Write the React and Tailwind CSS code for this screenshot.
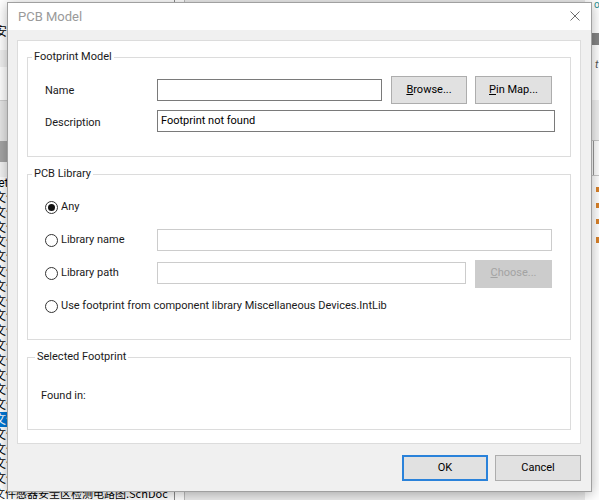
import React from 'react';

const fileRows = Array.from({ length: 20 }, (_, i) => i);

function Background() {
  return (
    <div className="flex h-full">
      {/* project tree on the left, mostly hidden behind the dialog */}
      <div className="flex w-[175px] shrink-0 flex-col overflow-hidden border-r border-[#8c8c8c] bg-white text-[12px] text-black font-['Noto_Sans_CJK_SC',sans-serif]">
        <div className="h-[23px] shrink-0" />
        <div className="-ml-[5px] h-[16px] shrink-0 leading-[16px] whitespace-nowrap">安</div>
        <div className="h-[11px] shrink-0" />
        <div className="h-[17px] shrink-0 bg-[#f0f0f0]" />
        <div className="h-[33px] shrink-0" />
        <div className="h-[41px] shrink-0 border-t border-[#cfcfcf] bg-[#e6e6e6]" />
        <div className="h-[21px] shrink-0 bg-[#a5a5a5]" />
        <div className="h-[15px] shrink-0 bg-[#f3f3f3]" />
        <div className="-ml-[9px] h-[13px] shrink-0 leading-[13px] whitespace-nowrap font-['Roboto',sans-serif]">Set</div>
        {fileRows.map((i) => (
          <div
            key={i}
            className={
              i === 15
                ? 'h-[14.8px] shrink-0 bg-[#0078d7] leading-[14.8px] text-white whitespace-nowrap'
                : 'h-[14.8px] shrink-0 leading-[14.8px] whitespace-nowrap'
            }
          >
            <span className="-ml-[6px]">文件</span>
          </div>
        ))}
        <div className="-ml-[6px] h-[14px] shrink-0 text-[11px] leading-[14px] whitespace-nowrap">
          文件感器安全区检测电路图.SchDoc
        </div>
      </div>
      <div className="w-[10px] shrink-0 border-r border-[#bdbdbd] bg-white" />
      <div className="flex-1 bg-[#ececec]" />
      {/* right side panel, a sliver shows beside the dialog */}
      <div className="flex w-[14px] shrink-0 flex-col bg-white">
        <div className="h-[33px] shrink-0 pl-[9px] text-[10px] leading-[10px] text-[#2b8f8f]">o</div>
        <div className="h-[12px] shrink-0 bg-[#858585]" />
        <div className="h-[55px] shrink-0 pl-[10px] pt-[14px] text-[11px] italic leading-[11px] text-[#555]">t</div>
        <div className="h-[40px] shrink-0 bg-[#f0f0f0]" />
        <div className="h-[36px] shrink-0 border-y border-[#c8c8c8] pl-[8px]">
          <div className="h-full border-l border-[#9a9a9a]" />
        </div>
        <div className="flex flex-col pl-[11px]">
          <div className="mt-[11px] h-[5px] w-[3px] bg-[#d9822b]" />
          <div className="mt-[11px] h-[5px] w-[3px] bg-[#d9822b]" />
          <div className="mt-[11px] h-[5px] w-[3px] bg-[#d9822b]" />
          <div className="mt-[13px] h-[6px] w-[3px] bg-[#d9822b]" />
        </div>
      </div>
    </div>
  );
}

function Radio({ checked }) {
  return (
    <span className="flex h-[13px] w-[13px] shrink-0 items-center justify-center rounded-full border border-[#333333] bg-white">
      {checked && <span className="h-[7px] w-[7px] rounded-full bg-[#111111]" />}
    </span>
  );
}

function Group({ title, className, legendClass = 'ml-[4px]', children }) {
  return (
    <fieldset className={'border border-[#dcdcdc] ' + className}>
      <legend className={'px-[2px] text-[11px] leading-[16px] text-[#1a1a1a] ' + legendClass}>{title}</legend>
      {children}
    </fieldset>
  );
}

function PcbModelDialog() {
  return (
    <div className="absolute left-[7px] top-[2px] flex h-[490px] w-[585px] flex-col border border-[#a0a0a0] bg-[#f0f0f0] shadow-[0_2px_12px_rgba(0,0,0,0.3)]">
      <div className="flex h-[27px] shrink-0 items-center justify-between bg-white pl-[10px] pr-[11px]">
        <span className="text-[13px] text-[#9a9a9a]">PCB Model</span>
        <svg width="10" height="10" viewBox="0 0 10 10" className="mb-[1px]">
          <path d="M0.5 0.5 L9.5 9.5 M9.5 0.5 L0.5 9.5" stroke="#6e6e6e" strokeWidth="1" fill="none" />
        </svg>
      </div>

      <div className="flex flex-1 flex-col pl-[9px] pr-[10px] pt-[10px]">
        <div className="flex h-[404px] shrink-0 flex-col border border-[#dcdcdc] bg-white px-[9px] text-[11px] text-[#1a1a1a]">
          <Group title="Footprint Model" className="mt-[8px] h-[108px]">
            <div className="flex flex-col pl-[17px] pt-[11px]">
              <div className="flex h-[28px] items-center">
                <span className="w-[112px] shrink-0 pt-[2px]">Name</span>
                <div className="h-[22px] w-[225px] border border-[#7a7a7a] bg-white" />
                <button className="ml-[9px] h-[28px] w-[76px] border border-[#adadad] bg-[#e1e1e1] pt-[1px] text-[11px] text-black">
                  <u>B</u>rowse...
                </button>
                <button className="ml-[8px] h-[28px] w-[77px] border border-[#adadad] bg-[#e1e1e1] pt-[1px] text-[11px] text-black">
                  <u>P</u>in Map...
                </button>
              </div>
              <div className="mt-[6px] flex h-[22px] items-center">
                <span className="w-[112px] shrink-0 pt-[5px]">Description</span>
                <div className="flex h-[22px] w-[398px] items-center border border-[#7a7a7a] bg-white pl-[3px] pt-[1px] text-black">
                  Footprint not found
                </div>
              </div>
            </div>
          </Group>

          <Group title="PCB Library" className="mt-[9px] h-[174px]">
            <div className="flex flex-col pl-[17px] pt-[9px]">
              <div className="flex h-[33px] items-center">
                <Radio checked />
                <span className="ml-[3px]">Any</span>
              </div>
              <div className="flex h-[33px] items-center">
                <div className="flex w-[112px] shrink-0 items-center">
                  <Radio />
                  <span className="ml-[3px]">Library name</span>
                </div>
                <div className="-mt-[1px] h-[22px] w-[395px] border border-[#cccccc] bg-white" />
              </div>
              <div className="flex h-[33px] items-center">
                <div className="flex w-[112px] shrink-0 items-center">
                  <Radio />
                  <span className="ml-[3px]">Library path</span>
                </div>
                <div className="-mt-[1px] h-[22px] w-[309px] border border-[#cccccc] bg-white" />
                <button className="ml-[9px] h-[28px] w-[77px] border border-[#cccccc] bg-[#cccccc] text-[11px] text-[#a3a3a3]">
                  <u>C</u>hoose...
                </button>
              </div>
              <div className="flex h-[33px] items-center">
                <Radio />
                <span className="ml-[3px] whitespace-nowrap">
                  Use footprint from component library Miscellaneous Devices.IntLib
                </span>
              </div>
            </div>
          </Group>

          <Group title="Selected Footprint" className="mt-[9px] h-[81px]" legendClass="ml-[7px]">
            <div className="pl-[13px] pt-[23px] leading-[16px]">Found in:</div>
          </Group>
        </div>

        <div className="mt-[11px] flex justify-end gap-[7px]">
          <button className="h-[26px] w-[86px] border-2 border-[#2a82da] bg-[#e1e1e1] text-[11px] text-black">OK</button>
          <button className="h-[26px] w-[86px] border border-[#adadad] bg-[#e1e1e1] text-[11px] text-black">Cancel</button>
        </div>
      </div>
    </div>
  );
}

export default function App() {
  return (
    <div className="relative h-[500px] w-[599px] overflow-hidden bg-white font-['Roboto',sans-serif]">
      <Background />
      <PcbModelDialog />
    </div>
  );
}
